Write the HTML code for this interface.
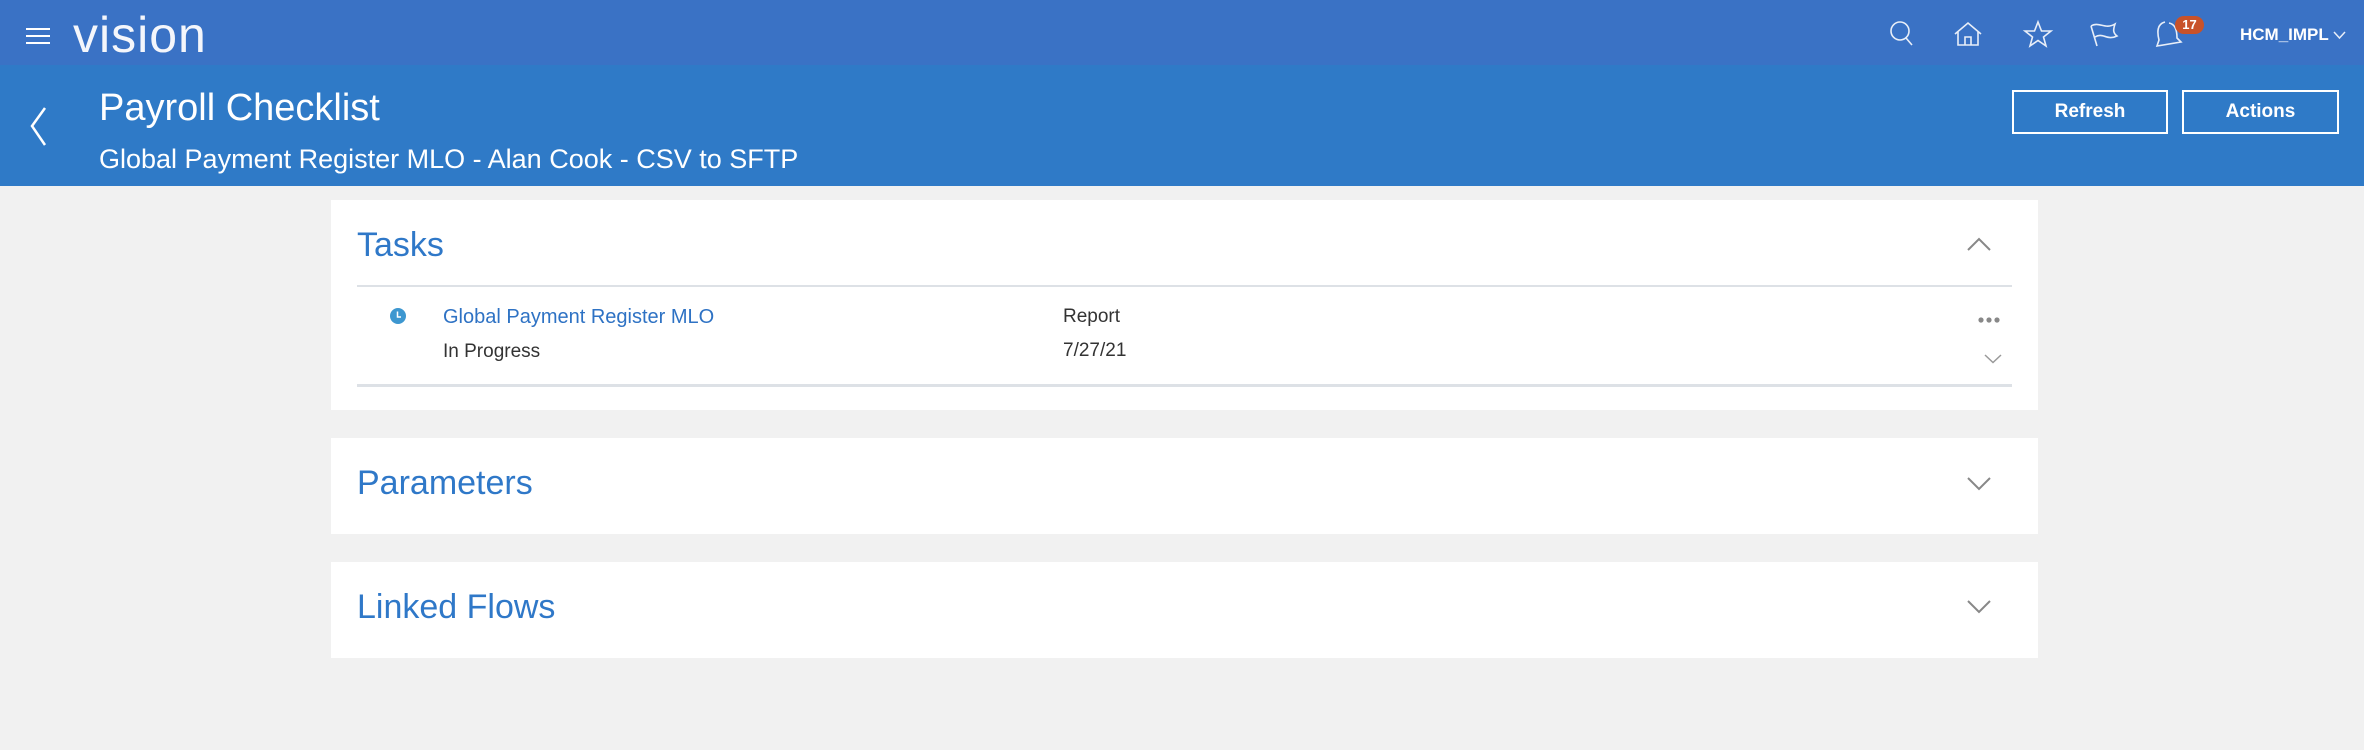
<!DOCTYPE html>
<html><head><meta charset="utf-8"><style>
*{margin:0;padding:0;box-sizing:border-box}
body{width:2364px;height:750px;background:#f1f1f1;font-family:"Liberation Sans",sans-serif;position:relative;overflow:hidden}
.a{position:absolute;white-space:nowrap}
.top{left:0;top:0;width:2364px;height:65px;background:#3a72c5}
.band{left:0;top:65px;width:2364px;height:121px;background:#2f7ac7}
.card{background:#fff;left:331px;width:1707px}
.h{color:#2f78c8;font-size:34px;left:357px}
.btn{border:2px solid #fff;color:#fff;font-weight:bold;font-size:19px;text-align:center;line-height:40px;height:44px;top:90px}
.t{font-size:19px;color:#333}
</style></head><body>
<div class="a top"></div>
<div class="a band"></div>
<svg class="a" style="left:26px;top:28px" width="24" height="17"><g stroke="#fff" stroke-width="2"><line x1="0" y1="1" x2="24" y2="1"/><line x1="0" y1="8" x2="24" y2="8"/><line x1="0" y1="15" x2="24" y2="15"/></g></svg>
<div class="a" style="left:73px;top:6px;font-size:50px;color:#f4f6fb;letter-spacing:1px">vision</div>
<svg class="a" style="left:27px;top:106px" width="22" height="42"><polyline points="18,2 5,20 18,39" fill="none" stroke="#fff" stroke-width="2.5"/></svg>
<div class="a" style="left:99px;top:87px;font-size:38px;color:#fff">Payroll Checklist</div>
<div class="a" style="left:99px;top:144px;font-size:27px;color:#fff">Global Payment Register MLO - Alan Cook - CSV to SFTP</div>
<svg class="a" style="left:1885px;top:18px" width="340" height="34" fill="none" stroke="#e8eef8" stroke-width="1.6">
<circle cx="15" cy="13" r="9"/><line x1="21" y1="20" x2="27" y2="27"/>
<path d="M70 16 L83 5 L96 16 M73 14 V27 H93 V14 M80 27 V19 H86 V27"/>
<path d="M153 4 L156.5 13 L166 13 L158.5 19 L161 28 L153 22.5 L145 28 L147.5 19 L140 13 L149.5 13 Z"/>
<path d="M212 28 L206 8 M206 8 C214 3 220 12 230 6 C228 12 228 15 232 18 C222 23 218 14 210 19"/>
<path d="M280 4 C272 6 272 14 274 22 L272 28 L296 24 L292 20 C292 12 290 6 284 5"/>
</svg>
<div class="a" style="left:2175px;top:16px;width:29px;height:18px;border-radius:9px;background:#c8522a;color:#fff;font-size:13px;font-weight:bold;text-align:center;line-height:18px">17</div>
<div class="a" style="left:2240px;top:25px;font-size:17px;font-weight:bold;color:#fff">HCM_IMPL</div>
<svg class="a" style="left:2333px;top:31px" width="13" height="9"><polyline points="1,1 6.5,7 12,1" fill="none" stroke="#e8eef8" stroke-width="1.5"/></svg>
<div class="a btn" style="left:2012px;width:156px">Refresh</div>
<div class="a btn" style="left:2182px;width:157px">Actions</div>
<div class="a card" style="top:200px;height:210px"></div>
<div class="a card" style="top:438px;height:96px"></div>
<div class="a card" style="top:562px;height:96px"></div>
<div class="a h" style="top:226px">Tasks</div>
<div class="a h" style="top:464px">Parameters</div>
<div class="a h" style="top:588px">Linked Flows</div>
<div class="a" style="left:357px;top:285px;width:1655px;height:2px;background:#dde1e6"></div>
<div class="a" style="left:357px;top:384px;width:1655px;height:3px;background:#dde1e6"></div>
<svg class="a" style="left:389px;top:307px" width="18" height="18"><circle cx="9" cy="9" r="8" fill="#3d97d0"/><polyline points="8.5,4.5 8.5,10 12,10" fill="none" stroke="#fff" stroke-width="1.5"/></svg>
<div class="a" style="left:443px;top:306px;font-size:20px;color:#2e72c4">Global Payment Register MLO</div>
<div class="a t" style="left:443px;top:341px">In Progress</div>
<div class="a t" style="left:1063px;top:306px">Report</div>
<div class="a t" style="left:1063px;top:340px">7/27/21</div>
<svg class="a" style="left:1977px;top:316px" width="26" height="8" fill="#888"><circle cx="4" cy="4" r="2.6"/><circle cx="12" cy="4" r="2.6"/><circle cx="20" cy="4" r="2.6"/></svg>
<svg class="a" style="left:1984px;top:354px" width="18" height="10"><polyline points="1,1 9,8.5 17,1" fill="none" stroke="#999" stroke-width="1.5"/></svg>
<svg class="a" style="left:1967px;top:237px" width="24" height="14"><polyline points="1,13 12,2 23,13" fill="none" stroke="#888" stroke-width="2"/></svg>
<svg class="a" style="left:1967px;top:477px" width="24" height="14"><polyline points="1,1 12,12 23,1" fill="none" stroke="#888" stroke-width="2"/></svg>
<svg class="a" style="left:1967px;top:600px" width="24" height="14"><polyline points="1,1 12,12 23,1" fill="none" stroke="#888" stroke-width="2"/></svg>
</body></html>
